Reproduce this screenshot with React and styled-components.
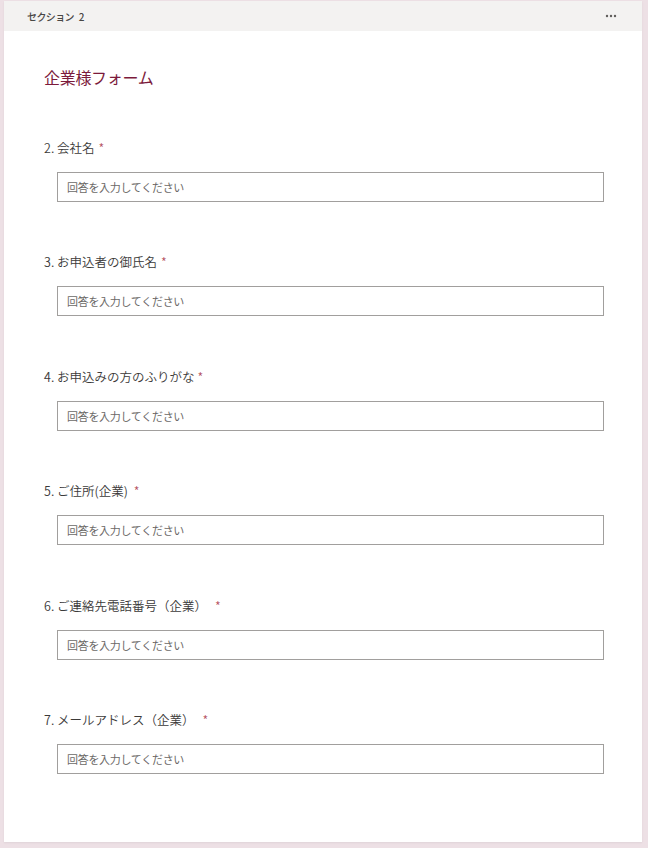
import React from 'react';
import styled, { createGlobalStyle } from 'styled-components';

const Global = createGlobalStyle`
  html, body {
    margin: 0;
    background: #ede0e5;
  }
  body {
    font-family: "Noto Sans CJK JP", "Noto Sans", sans-serif;
  }
`;

const Page = styled.div`
  padding: 1px 6px 6px 4px;
`;

const Card = styled.div`
  background: #fff;
  min-height: 841px;
  box-sizing: border-box;
  box-shadow: 0 1px 2px rgba(0, 0, 0, 0.06);
  display: flex;
  flex-direction: column;
`;

const Header = styled.div`
  height: 30px;
  background: #f3f2f1;
  display: flex;
  align-items: center;
  justify-content: space-between;
  padding: 0 25px 0 23px;
`;

const SectionName = styled.span`
  font-size: 10px;
  letter-spacing: -0.6px;
  word-spacing: 3px;
  color: #484644;
  font-weight: 500;
`;

const More = styled.svg`
  width: 12px;
  height: 4px;
  fill: #605e5c;
`;

const Body = styled.div`
  padding: 34px 38px 68px 40px;
`;

const Title = styled.h1`
  margin: 0 0 49px;
  font-size: 16px;
  line-height: 24px;
  font-weight: 400;
  color: #7c1a3b;
  letter-spacing: -0.3px;
`;

const Question = styled.div`
  margin-bottom: 50.4px;
  &:last-child {
    margin-bottom: 0;
  }
`;

const Label = styled.div`
  font-size: 12.5px;
  line-height: 20px;
  font-weight: 350;
  color: #3b3a39;
  margin-bottom: 14px;
`;

const Required = styled.span`
  color: #b5525f;
  margin-left: ${(p) => p.$gap}px;
`;

const Input = styled.input`
  display: block;
  box-sizing: border-box;
  width: calc(100% - 13px);
  margin-left: 13px;
  height: 30px;
  border: 1px solid #a19f9d;
  border-radius: 0;
  padding: 0 9px;
  font-family: inherit;
  font-size: 11px;
  letter-spacing: -0.3px;
  color: #252423;
  outline: none;
  &::placeholder {
    color: #6b6967;
  }
`;

const questions = [
  { n: 2, text: '会社名', gap: 4 },
  { n: 3, text: 'お申込者の御氏名', gap: 4 },
  { n: 4, text: 'お申込みの方のふりがな', gap: 3 },
  { n: 5, text: 'ご住所(企業)', gap: 6 },
  { n: 6, text: 'ご連絡先電話番号（企業）', gap: 8 },
  { n: 7, text: 'メールアドレス（企業）', gap: 8 },
];

export default function App() {
  return (
    <Page>
      <Global />
      <Card>
        <Header>
          <SectionName>セクション 2</SectionName>
          <More viewBox="0 0 12 4">
            <circle cx="2" cy="2" r="1.2" />
            <circle cx="6" cy="2" r="1.2" />
            <circle cx="10" cy="2" r="1.2" />
          </More>
        </Header>
        <Body>
          <Title>企業様フォーム</Title>
          {questions.map((q) => (
            <Question key={q.n}>
              <Label>
                {q.n}. {q.text}
                <Required $gap={q.gap}>*</Required>
              </Label>
              <Input placeholder="回答を入力してください" />
            </Question>
          ))}
        </Body>
      </Card>
    </Page>
  );
}
